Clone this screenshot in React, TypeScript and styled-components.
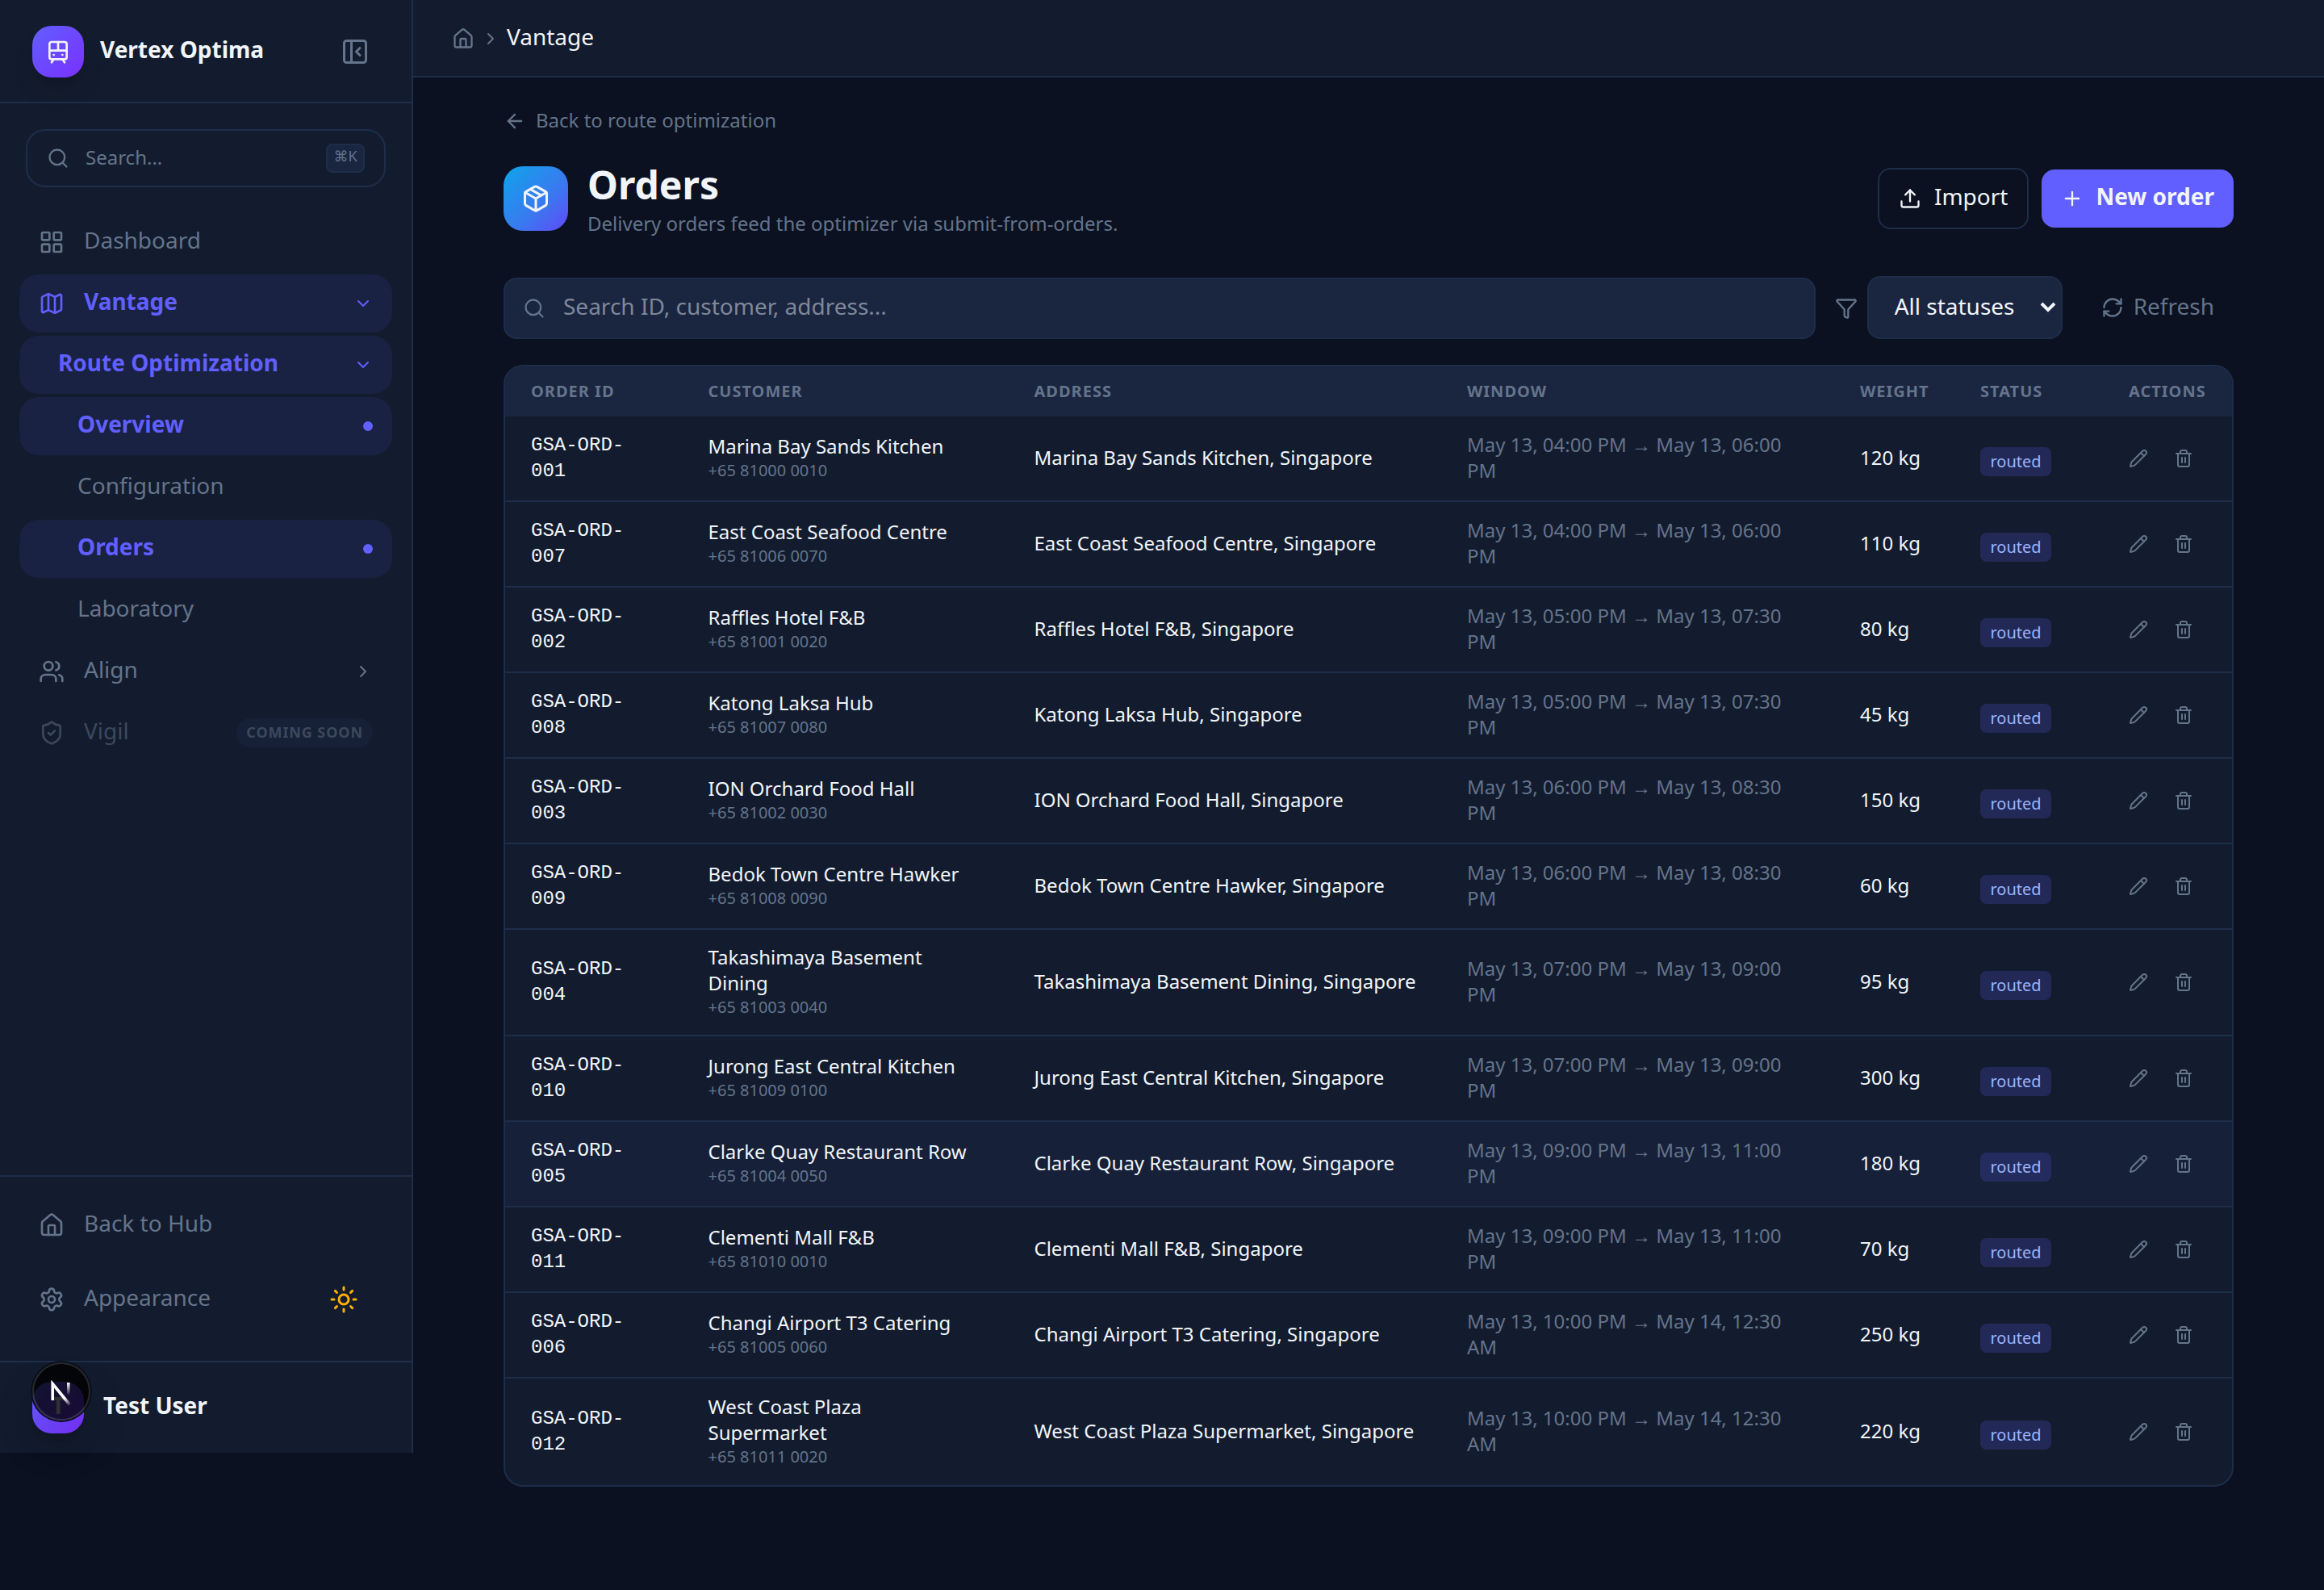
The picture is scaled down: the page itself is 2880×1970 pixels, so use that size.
import React from 'react';
import styled, { createGlobalStyle, css } from 'styled-components';
import {
  TramFront, PanelLeftClose, Search, LayoutGrid, Map, ChevronDown, ChevronRight, Users,
  ShieldCheck, House, Settings, Sun, ArrowLeft, Package, Upload, Plus, Funnel, RefreshCw,
  Pencil, Trash2,
} from 'lucide-react';

const c = {
  bg: '#0b1120',
  panel: '#131c2e',
  raised: '#1a2540',
  hover: '#162038',
  line: '#1e2d4a',
  active: '#192242',
  primary: '#615fff',
  text: '#f1f5f9',
  muted: '#64748b',
};

const Global = createGlobalStyle`
  * { box-sizing: border-box; }
  body { margin: 0; background: ${c.bg}; color: ${c.text}; font-family: "Noto Sans", sans-serif; font-size: 28px; line-height: 40px; }
  svg { display: block; flex: none; }
`;

const Page = styled.div`
  display: flex;
  align-items: flex-start;
  height: 1970px;
  overflow: hidden;
`;

const Sidebar = styled.aside`
  width: 512px;
  height: 1800px;
  flex: none;
  display: flex;
  flex-direction: column;
  background: ${c.panel};
  border-right: 2px solid ${c.line};
`;

const Brand = styled.div`
  height: 128px;
  padding: 2px 52px 0 40px;
  display: flex;
  align-items: center;
  border-bottom: 2px solid ${c.line};
`;

const Tile = styled.div`
  width: 64px;
  height: 64px;
  flex: none;
  display: grid;
  place-items: center;
  border-radius: 24px;
  background: linear-gradient(135deg, #615fff, #7a30ff);
  box-shadow: 0 20px 30px -6px rgba(0, 0, 0, 0.15), 0 8px 12px -8px rgba(0, 0, 0, 0.15);
  font-size: 28px;
  font-weight: 700;
`;

const Initial = styled.span`
  padding-bottom: 6px;
`;

const BrandName = styled.div`
  flex: 1;
  margin-left: 20px;
  padding-bottom: 6px;
  font-weight: 700;
`;

const Muted = styled.span`
  color: ${c.muted};
  display: flex;
`;

const QuickSearch = styled.div`
  margin: 32px 32px 0;
  height: 72px;
  padding: 0 24px;
  display: flex;
  align-items: center;
  gap: 20px;
  border: 2px solid ${c.line};
  border-radius: 24px;
  color: ${c.muted};
  font-size: 24px;
`;

const QuickLabel = styled.span`
  flex: 1;
  padding-bottom: 2px;
`;

const Kbd = styled.kbd`
  width: 48px;
  height: 36px;
  border: 2px solid ${c.line};
  border-radius: 8px;
  background: ${c.raised};
  font-family: "Noto Sans", "DejaVu Sans", sans-serif;
  font-size: 18px;
  line-height: 26px;
  text-align: center;
`;

const Nav = styled.nav`
  flex: 1;
  padding: 32px 24px 0;
  display: flex;
  flex-direction: column;
  gap: 4px;
`;

const NavItem = styled.div<{ $active?: boolean; $disabled?: boolean; $indent?: number }>`
  height: 72px;
  padding: 0 24px 0 ${(p) => p.$indent ?? 24}px;
  display: flex;
  align-items: center;
  gap: 24px;
  border-radius: 24px;
  color: ${c.muted};
  ${(p) => p.$active && css`
    background: ${c.active};
    color: ${c.primary};
    font-weight: 700;
  `}
  ${(p) => p.$disabled && css`opacity: 0.5;`}
`;

const NavLabel = styled.span`
  flex: 1;
  padding-bottom: 6px;
`;

const Dot = styled.span`
  width: 12px;
  height: 12px;
  border-radius: 50%;
  background: ${c.primary};
`;

const Soon = styled.span`
  height: 36px;
  padding: 0 12px;
  border-radius: 18px;
  background: ${c.raised};
  font-size: 18px;
  font-weight: 700;
  letter-spacing: 0.9px;
  line-height: 34px;
`;

const Tools = styled.div`
  height: 230px;
  padding: 24px 24px 0;
  display: flex;
  flex-direction: column;
  gap: 20px;
  border-top: 2px solid ${c.line};
`;

const SunBox = styled.span`
  display: flex;
  color: #ffb000;
  margin-right: 18px;
`;

const UserBar = styled.div`
  position: relative;
  height: 114px;
  padding: 24px 40px;
  display: flex;
  align-items: flex-start;
  gap: 24px;
  border-top: 2px solid ${c.line};
`;

const UserName = styled.div`
  padding-top: 9px;
  font-weight: 700;
`;

const DevBadge = styled.div`
  position: absolute;
  left: 40px;
  top: 0;
  width: 72px;
  height: 72px;
  border-radius: 50%;
  background: rgba(0, 0, 0, 0.8);
  box-shadow: 0 0 0 2px #0a0f1c, inset 0 0 0 2px rgba(255, 255, 255, 0.14), 0 32px 64px -16px rgba(0, 0, 0, 0.3);
`;

const Main = styled.main`
  flex: 1;
`;

const TopBar = styled.header`
  height: 96px;
  padding: 2px 48px 0;
  display: flex;
  align-items: center;
  gap: 8px;
  background: ${c.panel};
  border-bottom: 2px solid ${c.line};
`;

const Crumb = styled.span`
  padding-bottom: 6px;
`;

const Content = styled.div`
  width: 2144px;
  margin: 0 auto;
  padding-top: 34px;
`;

const BackLink = styled.div`
  height: 40px;
  display: flex;
  align-items: center;
  gap: 12px;
  color: ${c.muted};
  font-size: 24px;
`;

const BackText = styled.span`
  padding-bottom: 2px;
`;

const Heading = styled.div`
  margin-top: 36px;
  height: 80px;
  display: flex;
  align-items: center;
  gap: 24px;
`;

const OrdersTile = styled.div`
  width: 80px;
  height: 80px;
  display: grid;
  place-items: center;
  border-radius: 24px;
  background: linear-gradient(135deg, #0ea5e9, #3b78f0 60%, #6049f7);
`;

const Titles = styled.div`
  flex: 1;
  height: 80px;
`;

const Title = styled.h1`
  margin: -7px 0 0;
  font-size: 48px;
  line-height: 60px;
  font-weight: 700;
`;

const Subtitle = styled.p`
  margin: 0;
  color: ${c.muted};
  font-size: 24px;
  line-height: 36px;
`;

const Actions = styled.div`
  display: flex;
  align-items: center;
  gap: 16px;
`;

const Button = styled.button<{ $primary?: boolean }>`
  height: ${(p) => (p.$primary ? 72 : 76)}px;
  padding: 0 24px;
  display: flex;
  align-items: center;
  gap: ${(p) => (p.$primary ? 15 : 16)}px;
  border: ${(p) => (p.$primary ? '0' : `2px solid ${c.line}`)};
  border-radius: 16px;
  background: ${(p) => (p.$primary ? c.primary : 'transparent')};
  color: ${c.text};
  font: ${(p) => (p.$primary ? 700 : 400)} 28px/40px "Noto Sans", sans-serif;
`;

const ButtonText = styled.span`
  padding-bottom: 6px;
`;

const Filters = styled.div`
  margin-top: 56px;
  height: 78px;
  display: flex;
  align-items: center;
`;

const SearchField = styled.div`
  flex: 1;
  height: 76px;
  margin-top: 2px;
  padding: 0 22px;
  display: flex;
  align-items: center;
  gap: 22px;
  border: 2px solid ${c.line};
  border-radius: 16px;
  background: ${c.raised};
  color: ${c.muted};
`;

const Placeholder = styled.span`
  padding-bottom: 6px;
  color: #7f8899;
`;

const FunnelBox = styled.span`
  margin: 2px 12px 0 24px;
  color: ${c.muted};
`;

const Select = styled.div`
  width: 242px;
  height: 78px;
  padding: 0 5px 0 32px;
  display: flex;
  align-items: center;
  justify-content: space-between;
  border: 2px solid ${c.line};
  border-radius: 16px;
  background: ${c.raised};
`;

const SelectText = styled.span`
  padding-bottom: 4px;
`;

const Refresh = styled.div`
  margin-left: 24px;
  height: 72px;
  padding: 0 24px;
  display: flex;
  align-items: center;
  gap: 12px;
  color: ${c.muted};
`;

const RefreshText = styled.span`
  padding-bottom: 4px;
`;

const Table = styled.div`
  margin-top: 32px;
  border: 2px solid ${c.line};
  border-radius: 24px;
  overflow: hidden;
  background: ${c.panel};
  font-size: 24px;
  line-height: 32px;
`;

const Grid = styled.div`
  display: grid;
  grid-template-columns: 219.5px 404px 536.5px 487px 149px 184px 160px;
  align-items: center;
`;

const Head = styled(Grid)`
  height: 62px;
  background: ${c.raised};
  color: ${c.muted};
  font-size: 20px;
  font-weight: 700;
  letter-spacing: 1px;
`;

const HeadCell = styled.div`
  padding-left: 32px;
  white-space: nowrap;
`;

const Row = styled(Grid)<{ $hover?: boolean; $tall?: boolean }>`
  height: ${(p) => (p.$tall ? 132 : 106)}px;
  border-bottom: 2px solid ${c.line};
  background: ${(p) => (p.$hover ? c.hover : 'transparent')};
  &:last-child { border-bottom: 0; }
`;

const Cell = styled.div<{ $muted?: boolean }>`
  padding: 0 32px 3px;
  color: ${(p) => (p.$muted ? c.muted : c.text)};
`;

const IdCell = styled(Cell)`
  padding-bottom: 0;
  font-family: "Liberation Mono", monospace;
`;

const AddressCell = styled(Cell)`
  white-space: nowrap;
`;

const Phone = styled.div`
  color: ${c.muted};
  font-size: 20px;
  line-height: 27px;
`;

const Badge = styled.span`
  display: block;
  width: 88px;
  height: 36px;
  margin-top: 11px;
  border-radius: 8px;
  background: rgba(97, 95, 255, 0.2);
  color: #9ab4fb;
  font-size: 20px;
  line-height: 36px;
  text-align: center;
`;

const RowActions = styled.div`
  padding: 0 0 0 32px;
  display: flex;
  gap: 32px;
  color: ${c.muted};
`;

const orders: string[][] = [
  ['001', 'Marina Bay Sands Kitchen', '+65 81000 0010', 'May 13, 04:00 PM → May 13, 06:00 PM', '120'],
  ['007', 'East Coast Seafood Centre', '+65 81006 0070', 'May 13, 04:00 PM → May 13, 06:00 PM', '110'],
  ['002', 'Raffles Hotel F&B', '+65 81001 0020', 'May 13, 05:00 PM → May 13, 07:30 PM', '80'],
  ['008', 'Katong Laksa Hub', '+65 81007 0080', 'May 13, 05:00 PM → May 13, 07:30 PM', '45'],
  ['003', 'ION Orchard Food Hall', '+65 81002 0030', 'May 13, 06:00 PM → May 13, 08:30 PM', '150'],
  ['009', 'Bedok Town Centre Hawker', '+65 81008 0090', 'May 13, 06:00 PM → May 13, 08:30 PM', '60'],
  ['004', 'Takashimaya Basement Dining', '+65 81003 0040', 'May 13, 07:00 PM → May 13, 09:00 PM', '95'],
  ['010', 'Jurong East Central Kitchen', '+65 81009 0100', 'May 13, 07:00 PM → May 13, 09:00 PM', '300'],
  ['005', 'Clarke Quay Restaurant Row', '+65 81004 0050', 'May 13, 09:00 PM → May 13, 11:00 PM', '180'],
  ['011', 'Clementi Mall F&B', '+65 81010 0010', 'May 13, 09:00 PM → May 13, 11:00 PM', '70'],
  ['006', 'Changi Airport T3 Catering', '+65 81005 0060', 'May 13, 10:00 PM → May 14, 12:30 AM', '250'],
  ['012', 'West Coast Plaza Supermarket', '+65 81011 0020', 'May 13, 10:00 PM → May 14, 12:30 AM', '220'],
];

export default function App() {
  return (
    <Page>
      <Global />
      <Sidebar>
        <Brand>
          <Tile><TramFront size={32} /></Tile>
          <BrandName>Vertex Optima</BrandName>
          <Muted><PanelLeftClose size={36} /></Muted>
        </Brand>
        <QuickSearch>
          <Search size={28} />
          <QuickLabel>Search...</QuickLabel>
          <Kbd>⌘K</Kbd>
        </QuickSearch>
        <Nav>
          <NavItem><LayoutGrid size={32} /><NavLabel>Dashboard</NavLabel></NavItem>
          <NavItem $active><Map size={32} /><NavLabel>Vantage</NavLabel><ChevronDown size={24} /></NavItem>
          <NavItem $active $indent={48}><NavLabel>Route Optimization</NavLabel><ChevronDown size={24} /></NavItem>
          <NavItem $active $indent={72}><NavLabel>Overview</NavLabel><Dot /></NavItem>
          <NavItem $indent={72}><NavLabel>Configuration</NavLabel></NavItem>
          <NavItem $active $indent={72}><NavLabel>Orders</NavLabel><Dot /></NavItem>
          <NavItem $indent={72}><NavLabel>Laboratory</NavLabel></NavItem>
          <NavItem><Users size={32} /><NavLabel>Align</NavLabel><ChevronRight size={24} /></NavItem>
          <NavItem $disabled><ShieldCheck size={32} /><NavLabel>Vigil</NavLabel><Soon>COMING SOON</Soon></NavItem>
        </Nav>
        <Tools>
          <NavItem><House size={32} /><NavLabel>Back to Hub</NavLabel></NavItem>
          <NavItem><Settings size={32} /><NavLabel>Appearance</NavLabel><SunBox><Sun size={36} /></SunBox></NavItem>
        </Tools>
        <UserBar>
          <Tile><Initial>T</Initial></Tile>
          <UserName>Test User</UserName>
          <DevBadge>
            <svg width="72" height="72" viewBox="0 0 72 72" fill="none">
              <defs>
                <linearGradient id="diag" x1="36" y1="38" x2="48" y2="53" gradientUnits="userSpaceOnUse">
                  <stop stopColor="#fff" /><stop offset="0.4" stopColor="#fff" /><stop offset="1" stopColor="#fff" stopOpacity="0" />
                </linearGradient>
                <linearGradient id="bar" x1="45" y1="25" x2="45" y2="41" gradientUnits="userSpaceOnUse">
                  <stop stopColor="#fff" /><stop offset="1" stopColor="#fff" stopOpacity="0" />
                </linearGradient>
              </defs>
              <path d="M25.2 47V26.5L46.5 52.5" stroke="url(#diag)" strokeWidth="3.6" />
              <rect x="43" y="25" width="3.6" height="16" fill="url(#bar)" />
            </svg>
          </DevBadge>
        </UserBar>
      </Sidebar>
      <Main>
        <TopBar>
          <Muted><House size={28} /></Muted>
          <Muted><ChevronRight size={24} /></Muted>
          <Crumb>Vantage</Crumb>
        </TopBar>
        <Content>
          <BackLink><ArrowLeft size={28} /><BackText>Back to route optimization</BackText></BackLink>
          <Heading>
            <OrdersTile><Package size={36} /></OrdersTile>
            <Titles>
              <Title>Orders</Title>
              <Subtitle>Delivery orders feed the optimizer via submit-from-orders.</Subtitle>
            </Titles>
            <Actions>
              <Button><Upload size={28} /><ButtonText>Import</ButtonText></Button>
              <Button $primary><Plus size={28} /><ButtonText>New order</ButtonText></Button>
            </Actions>
          </Heading>
          <Filters>
            <SearchField><Search size={28} /><Placeholder>Search ID, customer, address...</Placeholder></SearchField>
            <FunnelBox><Funnel size={28} /></FunnelBox>
            <Select>
              <SelectText>All statuses</SelectText>
              <svg width="22" height="16" viewBox="0 0 22 16" fill="none"><path d="M3 3l8 8 8-8" stroke="#f1f5f9" strokeWidth="4" /></svg>
            </Select>
            <Refresh><RefreshCw size={28} /><RefreshText>Refresh</RefreshText></Refresh>
          </Filters>
          <Table>
            <Head>
              {['ORDER ID', 'CUSTOMER', 'ADDRESS', 'WINDOW', 'WEIGHT', 'STATUS', 'ACTIONS'].map((h) => <HeadCell key={h}>{h}</HeadCell>)}
            </Head>
            {orders.map(([id, name, phone, slot, kg]) => (
              <Row key={id} $hover={id === '005'} $tall={id === '004' || id === '012'}>
                <IdCell>GSA-ORD-{id}</IdCell>
                <Cell>{name}<Phone>{phone}</Phone></Cell>
                <AddressCell>{name}, Singapore</AddressCell>
                <Cell $muted>{slot}</Cell>
                <Cell>{kg} kg</Cell>
                <Cell><Badge>routed</Badge></Cell>
                <RowActions><Pencil size={24} /><Trash2 size={24} /></RowActions>
              </Row>
            ))}
          </Table>
        </Content>
      </Main>
    </Page>
  );
}
